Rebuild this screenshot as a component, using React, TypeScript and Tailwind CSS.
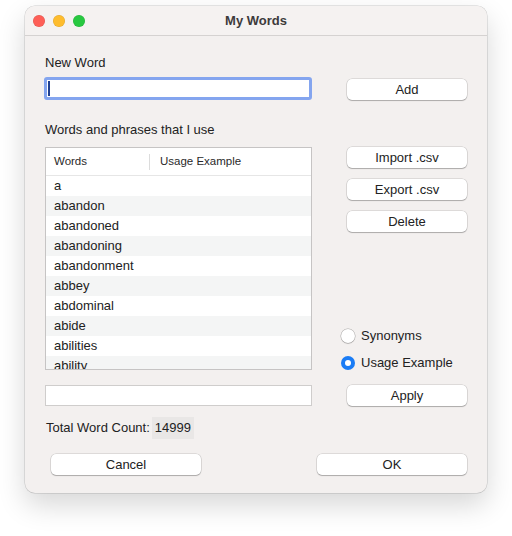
import React from "react";

const words = [
  "a",
  "abandon",
  "abandoned",
  "abandoning",
  "abandonment",
  "abbey",
  "abdominal",
  "abide",
  "abilities",
  "ability",
];

function MacButton({ label, className = "" }: { label: string; className?: string }) {
  return (
    <button
      className={`h-[21px] rounded-[5px] bg-white text-[13px] leading-none text-[#222] shadow-[0_0_0_0.5px_rgba(0,0,0,0.18),0_1px_1px_rgba(0,0,0,0.22)] ${className}`}
    >
      {label}
    </button>
  );
}

function Radio({ label, checked }: { label: string; checked?: boolean }) {
  return (
    <div className="flex h-[16px] items-center gap-[6px]">
      {checked ? (
        <span className="flex h-[14px] w-[14px] items-center justify-center rounded-full bg-[#1a7cf5]">
          <span className="h-[6px] w-[6px] rounded-full bg-white" />
        </span>
      ) : (
        <span className="h-[14px] w-[14px] rounded-full bg-white shadow-[0_0_0_0.5px_rgba(0,0,0,0.3),0_1px_1px_rgba(0,0,0,0.12)]" />
      )}
      <span className="text-[13px] leading-[16px] text-[#222]">{label}</span>
    </div>
  );
}

export default function App() {
  return (
    <div
      className="h-[536px] w-[512px] bg-white pl-[25px] pt-[6px]"
      style={{ fontFamily: "'Liberation Sans', Arial, sans-serif" }}
    >
      <div className="flex h-[487px] w-[462px] flex-col overflow-hidden rounded-[10px] bg-[#f3f0ef] shadow-[0_0_0_0.5px_rgba(0,0,0,0.18),0_12px_28px_rgba(0,0,0,0.16)]">
        {/* title bar */}
        <div className="grid h-[30px] grid-cols-[1fr_auto_1fr] items-center border-b border-[#d5d2d1] bg-[#f5f2f1]">
          <div className="flex items-center gap-[8px] pl-[8px]">
            <span className="h-[12px] w-[12px] rounded-full bg-[#fe5f57] shadow-[inset_0_0_0_0.5px_rgba(0,0,0,0.12)]" />
            <span className="h-[12px] w-[12px] rounded-full bg-[#febc2e] shadow-[inset_0_0_0_0.5px_rgba(0,0,0,0.12)]" />
            <span className="h-[12px] w-[12px] rounded-full bg-[#28c840] shadow-[inset_0_0_0_0.5px_rgba(0,0,0,0.12)]" />
          </div>
          <div className="text-[13px] font-bold text-[#3d3b3b]">My Words</div>
          <div />
        </div>

        <div className="flex flex-col px-[20px]">
          <div className="mt-[19px] h-[16px] text-[13px] leading-[16px] text-[#222]">New Word</div>

          <div className="mt-[6px] flex items-center justify-between">
            <div className="ml-[-1px] flex h-[23px] w-[268px] items-center rounded-[3px] border-[3px] border-[#84a5ef] bg-white">
              <span className="ml-[1px] h-[15px] w-[1.5px] bg-[#1f3f8f]" />
            </div>
            <MacButton label="Add" className="mt-[2px] w-[120px]" />
          </div>

          <div className="mt-[22px] h-[16px] text-[13px] leading-[16px] text-[#222]">
            Words and phrases that I use
          </div>

          <div className="mt-[9px] flex justify-between">
            <div className="h-[223px] w-[267px] overflow-hidden border border-[#c6c4c4] bg-white">
              <div className="flex h-[28px] items-center border-b border-[#e6e6e6] text-[11.5px] text-[#2a2a2a]">
                <div className="flex h-[16px] w-[104px] items-center border-r border-[#dcdcdc] pl-[8px]">Words</div>
                <div className="pl-[10px]">Usage Example</div>
              </div>
              {words.map((w, i) => (
                <div
                  key={w}
                  className={`flex h-[20px] items-center pl-[8px] text-[13px] text-[#222] ${i % 2 === 1 ? "bg-[#f4f5f5]" : "bg-white"}`}
                >
                  {w}
                </div>
              ))}
            </div>

            <div className="flex h-[223px] w-[120px] flex-col">
              <MacButton label="Import .csv" className="w-[120px]" />
              <MacButton label="Export .csv" className="mt-[11px] w-[120px]" />
              <MacButton label="Delete" className="mt-[11px] w-[120px]" />
              <div className="mb-[-1px] ml-[-6px] mt-auto flex flex-col gap-[11px]">
                <Radio label="Synonyms" />
                <Radio label="Usage Example" checked />
              </div>
            </div>
          </div>

          <div className="mt-[14px] flex items-center justify-between">
            <div className="h-[21px] w-[267px] border border-[#cfcdcc] bg-white" />
            <MacButton label="Apply" className="mt-[1px] w-[120px]" />
          </div>

          <div className="mt-[11px] flex items-center text-[13px] text-[#222]">
            <span className="ml-[1px]">Total Word Count:</span>
            <span className="ml-[2px] bg-[#e9e7e6] px-[3px] py-[1px]">14999</span>
          </div>

          <div className="mt-[15px] flex items-center justify-between pl-[6px]">
            <MacButton label="Cancel" className="w-[150px]" />
            <MacButton label="OK" className="w-[150px]" />
          </div>
        </div>
      </div>
    </div>
  );
}
